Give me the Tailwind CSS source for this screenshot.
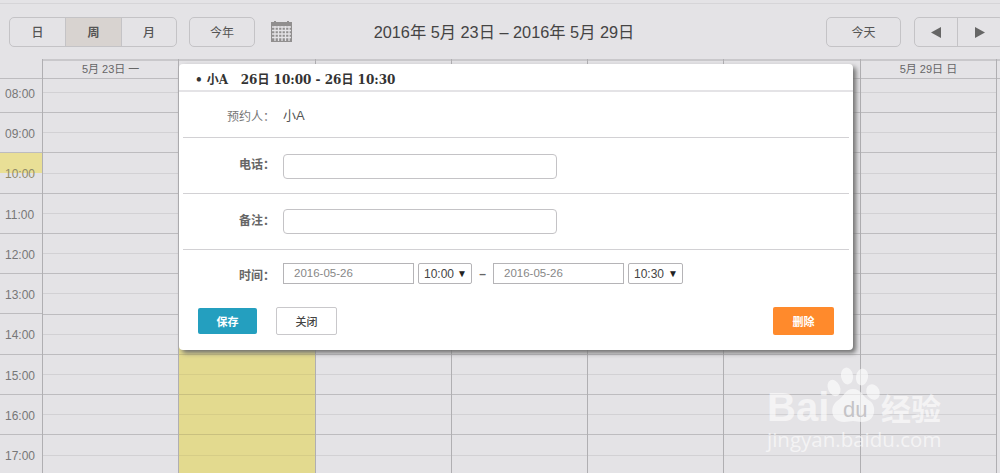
<!DOCTYPE html>
<html lang="zh-CN">
  <head>
    <title>预约日历</title>
    <meta charset="utf-8">
    <script src="https://cdn.jsdelivr.net/npm/@tailwindcss/browser@4"></script>
  </head>
  <body class="bg-[#e4e3e6]">
    <div class="relative h-[473px] w-[1000px] overflow-hidden bg-[#e4e3e6] font-['Liberation_Sans','Noto_Sans_CJK_SC',sans-serif] text-[#555]">
      <!-- toolbar -->
      <div class="mt-[3px] flex h-[56px] items-start overflow-hidden border-t border-[#d6d5d8] pt-[13px] pl-[9px]">
        <div class="flex h-[30px] w-[168px] shrink-0 overflow-hidden rounded-[5px] border border-[#c4c3c6] text-xs font-['Noto_Sans_CJK_SC',sans-serif]">
          <div class="flex w-[56px] items-center justify-center border-r border-[#c4c3c6] font-medium">日</div>
          <div class="flex w-[56px] items-center justify-center border-r border-[#c4c3c6] bg-[#d8d3d0] font-bold">周</div>
          <div class="flex flex-1 items-center justify-center font-medium">月</div>
        </div>
        <div class="ml-[12px] flex h-[30px] w-[66px] shrink-0 items-center justify-center rounded-[5px] border border-[#c4c3c6] text-xs font-['Noto_Sans_CJK_SC',sans-serif]">今年</div>
        <svg class="mt-[4px] ml-[16px] shrink-0" width="21" height="21" viewBox="0 0 21 21">
          <rect x="0" y="1" width="21" height="20" fill="#918f8f" />
          <rect x="3" y="0" width="2" height="2" fill="#918f8f" />
          <rect x="16" y="0" width="2" height="2" fill="#918f8f" />
          <path d="M1 6h19M1 9.500h19M1 13h19M1 16.500h19M4 5v15M7.500 5v15M11 5v15M14.500 5v15M18 5v15" stroke="#e4e3e6" stroke-width="1.300" fill="none" />
        </svg>
        <div class="ml-[81px] w-[262px] shrink-0 pt-[5px] text-center text-[16.3px] leading-[20px] whitespace-nowrap text-[#444]">2016年 5月 23日 – 2016年 5月 29日</div>
        <div class="ml-[191px] flex h-[30px] w-[75px] shrink-0 items-center justify-center rounded-[5px] border border-[#c4c3c6] text-xs font-['Noto_Sans_CJK_SC',sans-serif]">今天</div>
        <div class="ml-[13px] flex h-[30px] w-[90px] shrink-0 rounded-[5px] border border-[#c4c3c6]">
          <div class="flex w-[43px] items-center justify-center border-r border-[#c4c3c6]">
            <svg width="10" height="11" viewBox="0 0 10 11"><polygon points="0,5.500 10,0 10,11" fill="#666" /></svg>
          </div>
          <div class="flex w-[43px] items-center justify-center">
            <svg width="10" height="11" viewBox="0 0 10 11"><polygon points="0,0 10,5.500 0,11" fill="#666" /></svg>
          </div>
        </div>
      </div>

      <!-- calendar -->
      <div id="calendar" class="flex h-[414px]">
        <div id="times" class="w-[42px] shrink-0"></div>
      </div>

      <!-- dialog -->
      <div class="absolute top-[64px] left-[179px] h-[286px] w-[674px] rounded-[4px] bg-white shadow-[3px_3px_5px_#6f6f6f]">
        <div class="flex h-[28px] items-center border-b-2 border-[#e4e3e6] pt-[5px] pl-[16px] font-['DejaVu_Serif','Noto_Sans_CJK_SC',serif] text-xs font-bold whitespace-pre text-[#333]">• 小A   26日 10:00 - 26日 10:30</div>
        <div class="mx-[4px] flex h-[46px] items-center border-b border-[#d2d1d4] pt-[3px] text-xs">
          <div class="w-[92px] text-right font-['Noto_Sans_CJK_SC',sans-serif] text-[#777]">预约人：</div>
          <div class="ml-[8px] text-[13px] text-[#555]">小A</div>
        </div>
        <div class="mx-[4px] flex h-[56px] items-center border-b border-[#d2d1d4] text-xs">
          <div class="-mt-[3px] w-[92px] text-right font-['Noto_Sans_CJK_SC',sans-serif] font-bold text-[#666]">电话：</div>
          <div class="mt-[1px] ml-[8px] h-[25px] w-[274px] rounded-[4px] border border-[#c4c3c6]"></div>
        </div>
        <div class="mx-[4px] flex h-[56px] items-center border-b border-[#d2d1d4] text-xs">
          <div class="-mt-[3px] w-[92px] text-right font-['Noto_Sans_CJK_SC',sans-serif] font-bold text-[#666]">备注：</div>
          <div class="ml-[8px] h-[25px] w-[274px] rounded-[4px] border border-[#c4c3c6]"></div>
        </div>
        <div class="mx-[4px] flex h-[50px] items-center pb-[3px] text-xs">
          <div class="w-[92px] pt-[3px] text-right font-['Noto_Sans_CJK_SC',sans-serif] font-bold text-[#666]">时间：</div>
          <div class="ml-[8px] flex h-[21px] w-[131px] items-center border border-[#b5b4b7] pl-[10px] text-[11.5px] text-[#888]">2016-05-26</div>
          <div class="ml-[4px] flex h-[21px] w-[54px] items-center justify-between rounded-[2px] border border-[#b5b4b7] pr-[4px] pl-[5px] text-[#444]">10:00<span class="text-[10px] text-[#222]">▼</span></div>
          <div class="w-[21px] text-center font-bold text-[#666]">–</div>
          <div class="flex h-[21px] w-[131px] items-center border border-[#b5b4b7] pl-[10px] text-[11.5px] text-[#888]">2016-05-26</div>
          <div class="ml-[4px] flex h-[21px] w-[55px] items-center justify-between rounded-[2px] border border-[#b5b4b7] pr-[4px] pl-[5px] text-[#444]">10:30<span class="text-[10px] text-[#222]">▼</span></div>
        </div>
        <div class="flex items-center pt-[7px] pr-[19px] pl-[19px] font-['Noto_Sans_CJK_SC',sans-serif] text-[11px] font-bold">
          <div class="flex h-[26px] w-[59px] items-center justify-center rounded-[2px] bg-[#249fbf] text-white">保存</div>
          <div class="ml-[19px] flex h-[28px] w-[61px] items-center justify-center rounded-[2px] border border-[#c9c8cb] font-medium text-[#444]">关闭</div>
          <div class="ml-auto flex h-[28px] w-[61px] items-center justify-center rounded-[2px] bg-[#ff8a2c] text-white">删除</div>
        </div>
      </div>

      <!-- watermark -->
      <div class="absolute top-[365px] left-[767px] h-[90px] w-[180px] text-white/60">
        <svg class="absolute top-0 left-[50px]" width="70" height="60" viewBox="0 0 70 60">
          <ellipse cx="30" cy="11" rx="6" ry="8.500" fill="#fff" fill-opacity="0.6" transform="rotate(-10 30 11)" />
          <ellipse cx="45" cy="12" rx="6" ry="8.500" fill="#fff" fill-opacity="0.6" transform="rotate(10 45 12)" />
          <ellipse cx="17" cy="23" rx="6" ry="8.500" fill="#fff" fill-opacity="0.6" transform="rotate(-25 17 23)" />
          <ellipse cx="56" cy="27" rx="6.500" ry="8" fill="#fff" fill-opacity="0.6" transform="rotate(-25 56 27)" />
          <path d="M36 24c8 0 10 8 17 12 7 5 6 21-8 21-4 0-6-1-9-1s-5 1-9 1c-13 0-15-15-7-21 7-4 8-12 16-12z" fill="#fff" fill-opacity="0.6" />
        </svg>
        <div class="absolute top-[20px] left-0 font-['Liberation_Sans',sans-serif] text-[40px] leading-[44px] font-bold">Bai</div>
        <div class="absolute top-[32px] left-[76px] font-['Liberation_Sans',sans-serif] text-[22px] leading-[26px] text-[#c4c3c6]">du</div>
        <div class="absolute top-[22px] left-[114px] font-['Noto_Sans_CJK_SC',sans-serif] text-[30px] leading-[40px] font-bold whitespace-nowrap">经验</div>
        <div class="absolute top-[62px] left-0 font-['Open_Sans',sans-serif] text-[20.5px] leading-[24px] whitespace-nowrap">jingyan.baidu.com</div>
      </div>
    </div>

    <script>
      // only the outer day headers are visible, the dialog covers the others
      const days = ["5月 23日 一", "", "", "", "", "", "5月 29日 日"];
      const hours = ["08:00", "09:00", "10:00", "11:00", "12:00", "13:00", "14:00", "15:00", "16:00", "17:00"];
      const TODAY = 1;
      const SLOTS = 22;

      // time gutter
      let gutter = '<div class="h-[20px] border-b border-[#bdbcbf]"></div>';
      hours.forEach((h, i) => {
        const size = i === 0 ? "h-[34px] pt-[6px]" : "h-[40.3px] pt-[12px]";
        const mark = h === "10:00" ? "bg-[linear-gradient(#e9df96_50%,transparent_50%)] text-[#8f8a68]" : "text-[#777]";
        gutter += `<div class="${size} ${mark} border-b border-[#bdbcbf] pl-[5px] text-xs leading-[18px]">${h}</div>`;
      });
      document.getElementById("times").innerHTML = gutter;

      // day columns: first slot is cut short, the rest are half-hours
      let cols = "";
      days.forEach((d, c) => {
        let slots = "";
        for (let s = 0; s < SLOTS; s++) {
          const size = s === 0 ? "h-[14px]" : "h-[20.15px]";
          const yellow = c === TODAY && s >= 5;
          const hourLine = s % 2 === 1;
          const line = yellow
            ? (hourLine ? "border-[#c9c07f] bg-[#e3da8f]" : "border-[#d6cd87] bg-[#e3da8f]")
            : (hourLine ? "border-[#bdbcbf]" : "border-[#d2d1d4]");
          slots += `<div class="${size} ${line} border-b"></div>`;
        }
        cols += `<div class="w-[136.3px] shrink-0 border-l border-[#b0afb2]">
          <div class="h-[20px] border-t-2 border-b border-t-[#c9c8cb] border-b-[#bdbcbf] text-center text-[11px] leading-[17px] text-[#666]">${d}</div>
          ${slots}
        </div>`;
      });
      cols += '<div class="flex-1 border-l border-[#b0afb2]"><div class="h-[20px] border-t-2 border-b border-t-[#c9c8cb] border-b-[#bdbcbf]"></div></div>';
      document.getElementById("calendar").insertAdjacentHTML("beforeend", cols);
    </script>
  </body>
</html>
